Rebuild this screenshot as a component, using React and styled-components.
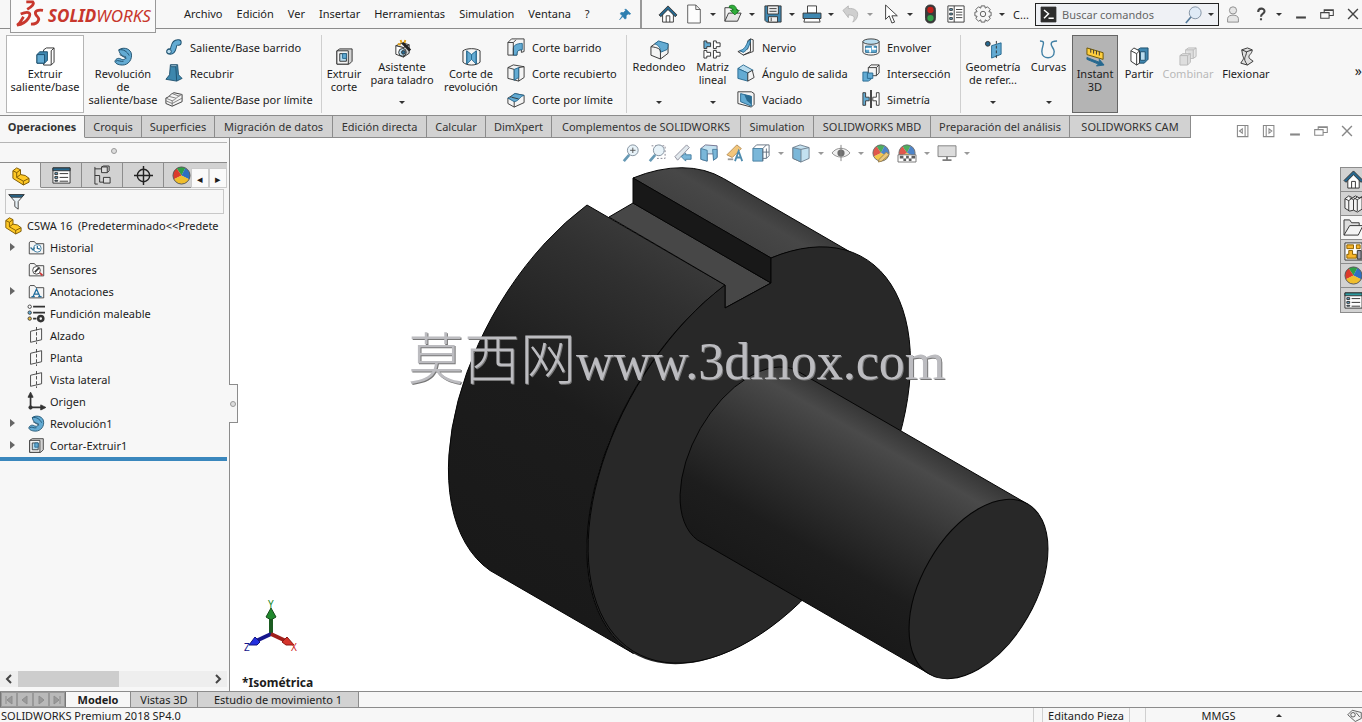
import React, { useState } from 'react';
import styled, { createGlobalStyle } from 'styled-components';

const GlobalStyle = createGlobalStyle`
  * {
    box-sizing: border-box;
  }

  body {
    margin: 0;
    background: #fff;
    color: #1c1c1c;
    font-family: 'Noto Sans', 'Open Sans', sans-serif;
    font-size: 11px;
    line-height: 13px;
  }

  button, input {
    margin: 0;
    padding: 0;
    border: 0;
    background: none;
    color: inherit;
    font: inherit;
  }
`;

const K = '#333';
const B = '#63abd3';
const D = '#26688f';
const L = '#b9dcee';
const W = '#f4f4f4';
const G = '#d3d3d3';

const box = (top, front, side) => (
  <>
    <path d="M3 6l7-3 7 2-6 3z" fill={top} />
    <path d="M3 6l8 2v10l-8-3z" fill={front} />
    <path d="M17 5v9l-6 4V8z" fill={side} />
  </>
);

const house = (
  <>
    <path d="M4 10v9h12v-9l-6-6z" fill="#fff" />
    <path d="M8 19v-7h4v7" fill="none" />
    <path d="M0 11L10 1l10 10-2 2-8-8-8 8z" fill={D} />
  </>
);

const folder = (
  <path d="M1.500 4.500v13h17v-12h-9l-2-2.500h-5z" fill={W} />
);

const part = (
  <g stroke="#7a5600">
    <path d="M2 5l4-3 4 2v5l5 1 4 3v4l-6 3L2 13z" fill="#ffc926" />
    <path d="M2 5l4 2v5l7 4v4M6 7l4-3M6 12l4-3M13 16l6-3" fill="none" />
  </g>
);

const revolve = (
  <g stroke="#1d4f6d">
    <path d="M5 3c4-3 11-2 13 3 2 7-3 13-9 13-5 0-8-2-8-4 1-3 4-4 7-2 3 1 5-1 4-3-3 0-6-2-7-7z" fill={B} />
    <path d="M5 3c5-1 9 2 11 6M6 8l7 4M2 15c2-2 5 1 8 0" fill="none" />
  </g>
);

const cutExtrude = (
  <>
    <path d="M2 4l3-2h13v13l-3 3H2z" fill={G} />
    <path d="M2 4h12v14H2z" fill={W} />
    <path d="M5 7h7v8H5z" fill={L} />
    <path d="M8 7h4v5H8z" fill={B} stroke={D} />
  </>
);

const plane = (
  <>
    <path d="M3 5l13-3v13L3 18z" fill="none" />
    <path d="M10 0v20" fill="none" strokeDasharray="4 2" />
  </>
);

const sphere = (
  <g stroke="none">
    <circle cx="10" cy="10" r="9" fill="#d7d7d7" />
    <path d="M10 10L5 2.500A9 9 0 0 1 14 2z" fill="#2f9f45" />
    <path d="M10 10L5 2.500A9 9 0 0 0 2 14z" fill="#db3a2c" />
    <path d="M10 10L14 2A9 9 0 0 1 18 14z" fill="#2f6fc0" />
    <path d="M10 10l-8 4a9 9 0 0 0 16 0z" fill="#f0be2c" />
    <circle cx="10" cy="10" r="9" fill="none" stroke="#555" />
  </g>
);

const magnifier = (
  <>
    <circle cx="12" cy="7" r="6" fill="#e4f1f8" stroke="#678" />
    <path d="M8 12l-6 7" fill="none" stroke="#4c88a8" strokeWidth="3" />
  </>
);

const listPanel = (color) => (
  <>
    <path d="M1 2h18v16H1z" fill="#fff" />
    <path d="M1 2h18v3H1z" fill={color} />
    <path d="M3 7h3v2H3zM3 11h3v2H3zM3 15h3v1H3z" fill={B} />
    <path d="M8 8h9M8 12h9M8 16h9" />
  </>
);

const icons = {
  home: house,
  newDoc: <path d="M3 0h9l5 5v15H3zM12 0v5h5" fill="#fdfdfd" stroke="#555" />,
  open: (
    <>
      <path d="M1 18V3h6l2 2h6v4" fill={W} />
      <path d="M1 18L5 9h14l-4 9z" fill="#e6e6e6" />
      <path d="M6 1c4-2 8 0 8 5h3l-5 5-5-5h3c0-2-1-3-4-3z" fill="#2fae3a" stroke="#16771f" />
    </>
  ),
  save: (
    <>
      <path d="M1 1h18v18H3l-2-2z" fill="#3f87b0" />
      <path d="M4 1h12v9H4zM5 13h10v6H5z" fill="#eee" />
      <path d="M6 4h8M6 7h8M8 14v4" />
    </>
  ),
  print: (
    <>
      <path d="M5 1h10v8H5z" fill="#fff" />
      <path d="M0 9h20v6H0z" fill="#3f87b0" />
      <path d="M2 15h16l1 4H1z" fill="#fff" />
    </>
  ),
  undo: <path d="M1 6l6-5v3c7-1 12 3 10 9-1 3-2 4-5 6 3-5 2-8-5-8v3z" fill="#cfcfcf" stroke="#b5b5b5" />,
  cursor: <path d="M4 0v16l4-4 3 8 3-1-3-7h6z" fill="#fff" />,
  traffic: (
    <>
      <rect x="5" y="0" width="11" height="20" rx="5" fill="#3a3a3a" />
      <circle cx="10.500" cy="5.500" r="3.500" fill="#c4201b" stroke="none" />
      <circle cx="10.500" cy="14.500" r="3.500" fill="#35a14a" stroke="none" />
    </>
  ),
  options: (
    <>
      <path d="M1 1h18v18H1zM8 1v18" fill="#fff" />
      <path d="M3 4h3v2H3zM3 9h3v2H3zM3 14h3v2H3z" fill={B} />
      <path d="M10 5h7M10 8h7M10 11h7M10 14h7" />
    </>
  ),
  gear: (
    <>
      <path d="M8 1h4l.500 2.500 2.500-1.500 3 3-1.500 2.500L19 8v4l-2.500.500L18 15l-3 3-2.500-1.500L12 19H8l-.500-2.500L5 18l-3-3 1.500-2.500L1 12V8l2.500-.500L2 5l3-3 2.500 1.500z" fill="none" stroke="#555" />
      <circle cx="10" cy="10" r="3" fill="none" stroke="#555" />
    </>
  ),
  extrude: (
    <>
      <path d="M8 3l3-2h8v15l-3 3H8z" fill="#fff" />
      <path d="M16 4v15M16 4l3-3" />
      <path d="M1 8l3-3h8v9l-3 3H1z" fill="#3f87b0" stroke="#1d4f6d" />
      <path d="M1 8h8v9H1z" fill={B} stroke="#1d4f6d" />
    </>
  ),
  revolve,
  sweep: (
    <>
      <path d="M5 15c7 1 2-11 10-10" fill="none" stroke="#1d4f6d" strokeWidth="7" strokeLinecap="round" />
      <path d="M5 15c7 1 2-11 10-10" fill="none" stroke={B} strokeWidth="5" strokeLinecap="round" />
      <circle cx="4.500" cy="15" r="2.500" fill={L} stroke="#1d4f6d" />
    </>
  ),
  loft: (
    <>
      <path d="M6 1h8l1 11 4 4-6 3-12-2 4-5z" fill="#3d87ad" stroke="#1d4f6d" />
      <path d="M6 1h8l-2 2H7z" fill={L} stroke="#1d4f6d" />
      <path d="M12 3l1 16" stroke="#1d4f6d" />
    </>
  ),
  boundary: (
    <>
      <path d="M1 9c4-1 5-5 9-6l9 2v8L8 18l-7-3z" fill={W} />
      <path d="M1 9l7 3c4-1 6-6 11-7M8 12v6M4 7l8 2M8 4l8 3M1 12l7 3 11-6" fill="none" stroke="#777" />
    </>
  ),
  cutExtrude,
  hole: (
    <>
      {box(W, '#fff', G)}
      <circle cx="10" cy="13" r="4" fill={L} />
      <circle cx="11" cy="13" r="2" fill={D} />
      <path d="M10 3l8 8" strokeWidth="3" stroke="#222" />
      <path d="M8 0l1 3M13 0l-1 3M5 4l3 1" stroke="#e0a21d" strokeWidth="2" />
    </>
  ),
  cutRevolve: (
    <>
      <path d="M1 4c4-3 14-3 18 0v12c-4 4-14 4-18 0z" fill={W} />
      <path d="M5 4l5 4 5-4v14l-5-5-5 5z" fill={B} stroke={D} />
      <path d="M10 8v5M5 4v14M15 4v14" stroke={D} />
    </>
  ),
  cutSweep: (
    <>
      <path d="M1 5l4-4h14v14l-3 1v-3c-4 0-5 2-5 6H1z" fill={W} />
      <path d="M7 19V12c0-4 4-6 10-6v7c-4 0-6 1-6 6z" fill={B} stroke={D} />
      <path d="M1 5h6v14M7 5l3-3" fill="none" />
    </>
  ),
  cutLoft: (
    <>
      <path d="M1 4l6-3 12 2v12l-6 4-12-3z" fill={W} />
      <path d="M1 4l7 2v12M13 4v15M13 4l6-1" fill="none" />
      <path d="M8 6l5-2v11l-5 3z" fill={B} stroke={D} />
    </>
  ),
  cutBoundary: (
    <>
      <path d="M1 9l8-5 10 2v8l-11 5-7-4z" fill={W} />
      <path d="M1 9c4 1 4-4 8-5l10 2c-5 1-5 6-11 7z" fill={B} stroke={D} />
      <path d="M8 13v6M5 8l8 2" />
    </>
  ),
  fillet: (
    <>
      <path d="M1 7l7-5 11 2v10l-8 6-10-4z" fill={W} />
      <path d="M5 4l4-3 10 3c0 0 0 5-1 6l-7 3c0-4-1-7-6-9z" fill={B} stroke={D} />
      <path d="M1 7c7 1 10 2 10 6v7" fill="none" />
    </>
  ),
  pattern: (
    <>
      <path d="M1 1h3v2h4v4H4v2H1z" fill={B} />
      <path d="M11 1h3v2h4v4h-4v2h-3zM1 11h3v2h4v4H4v2H1zM11 11h3v2h4v4h-4v2h-3z" fill="#fff" />
    </>
  ),
  rib: (
    <>
      <path d="M1 15l11-3V3l3-2v14L7 19z" fill={W} />
      <path d="M3 14c5-1 7-5 9-10l3-2c-1 7-3 11-8 14z" fill={B} stroke={D} />
      <path d="M15 1l3 1v13l-11 4" fill="none" />
    </>
  ),
  draft: (
    <>
      <path d="M1 5l6-4 11 6-6 3z" fill={L} stroke={D} />
      <path d="M1 5l11 5v9L1 16z" fill={B} stroke={D} />
      <path d="M12 10l5-3 2 8-7 4z" fill={W} />
    </>
  ),
  shell: (
    <>
      <path d="M1 2h15l3 2v12l-3 3L1 15z" fill={W} />
      <path d="M4 4l12 3v11L4 13z" fill={B} stroke={D} />
      <path d="M8 5l8 2v9l-5-4z" fill="#296b91" stroke="none" />
    </>
  ),
  wrap: (
    <>
      <path d="M1 4v12c3 4 15 4 18 0V4z" fill={W} />
      <ellipse cx="10" cy="4" rx="9" ry="3" fill={L} />
      <path d="M4 9h12v7H4z" fill={B} stroke={D} />
      <path d="M4 12h5v4M12 9v3h4" fill="none" stroke="#fff" strokeWidth="2" />
    </>
  ),
  intersect: (
    <>
      <path d="M1 9h9v8l-3 2H1z" fill={B} stroke={D} />
      <path d="M7 4l3-3h9v9l-3 3H7z" fill={W} />
      <path d="M7 4h9v9M16 4l3-3" fill="none" />
      <path d="M6 10h6v6H6z" fill={B} stroke={D} />
    </>
  ),
  mirror: (
    <>
      <path d="M1 3h3v5h4v4H4v5H1z" fill={B} />
      <path d="M10 0v20" strokeWidth="2" />
      <path d="M19 3h-3v5h-4v4h4v5h3z" fill="#fff" />
    </>
  ),
  refGeometry: (
    <>
      <circle cx="4" cy="4" r="2.500" fill={D} />
      <path d="M8 6l10-3v12L8 19z" fill={B} stroke={D} />
      <path d="M13 1v18" strokeDasharray="3 2" />
    </>
  ),
  curves: <path d="M1 1c7 0 2 5 2 11 0 9 13 9 13 0 0-4-6-7-2-10 2-1 5-1 5-1" fill="none" stroke="#4080a5" strokeWidth="1.500" />,
  instant: (
    <>
      <path d="M1 1l17 5v7L1 8z" fill="#ffcf3e" stroke="#6d5500" />
      <path d="M5 2v4M8 3v4M11 4v4M14 5v4" />
      <path d="M1 11l13 5v-3l5 6-8 1 2-2-12-5z" fill={D} stroke={D} />
    </>
  ),
  split: (
    <>
      <path d="M8 3l3-2h8v12l-4 4H8z" fill="#3f87b0" stroke="#1d4f6d" />
      <path d="M11 5h5v9h-5z" fill={L} stroke="#1d4f6d" />
      <path d="M1 4l3-3 6 3v13l-3 2-6-4z" fill="#fff" />
      <path d="M1 4l6 3v12M7 7l3-3" fill="none" />
    </>
  ),
  combine: (
    <g stroke="#b9b9b9">
      <path d="M7 3l3-2h8v9l-3 2H7z" fill="#e8e8e8" />
      <path d="M7 3h8v9M15 3l3-2M1 9l3-2h8v9l-3 3H1zM1 9h8v10M9 9l3-2" fill="#dedede" />
    </g>
  ),
  flex: (
    <>
      <path d="M5 3l6-2 5 2c0 5-5 5-3 9l4 3-6 4-7-2c2-4 4-4 2-8z" fill="#e0e0e0" />
      <path d="M5 3l5 2c0 6-5 6 1 14M10 5l6-2" fill="none" />
    </>
  ),
  zoomFit: (
    <>
      {magnifier}
      <path d="M9 7h6M12 4v6" stroke="#333" />
    </>
  ),
  zoomArea: (
    <>
      <path d="M4 2h15v14H9" fill="none" strokeDasharray="2 2" stroke="#667" />
      {magnifier}
    </>
  ),
  prevView: (
    <>
      <path d="M1 14L14 1l3 3L4 18z" fill="#dce5ea" stroke="#778" />
      <path d="M8 14l5-4v2h6v5h-6v2z" fill={B} stroke={D} />
    </>
  ),
  section: (
    <>
      <path d="M1 5l5-4 13 1v13l-4 3v-7H8v8l-7-2z" fill={L} stroke="#557" />
      <path d="M1 5l7 2v12l-7-2zM14 6h5v9l-4 3z" fill={B} stroke={D} />
    </>
  ),
  annotView: (
    <>
      <path d="M1 12L12 1l5 4L7 15z" fill="#f0bd65" stroke="#a87735" />
      <path d="M2 17h6" stroke="#888" strokeWidth="2" />
      <path d="M10 19l4-11 4 11M11 15h6" fill="none" stroke="#2f78a0" strokeWidth="2" />
    </>
  ),
  viewOrient: (
    <>
      <path d="M1 5h11v14H1z" fill={B} stroke={D} />
      <path d="M1 5l4-4h14v12l-3 3h-4M12 5l4-4M12 5v14M16 5v11M12 9h7" fill="none" stroke="#456" />
    </>
  ),
  display: (
    <g stroke="#567">
      <path d="M1 4l8-3 10 3v12l-9 4-9-4z" fill={L} />
      <path d="M1 4l9 2v14l-9-4z" fill={B} />
      <path d="M10 6l9-2" />
    </g>
  ),
  eye: (
    <>
      <path d="M0 10c5-7 15-7 20 0-5 6-15 6-20 0z" fill="#eee" stroke="#777" />
      <circle cx="10" cy="10" r="4" fill="#555" stroke="none" />
      <path d="M10 1v18" stroke="#666" />
    </>
  ),
  sphere,
  editLook: (
    <>
      {sphere}
      <path d="M8 17l8-8 3 3-8 7-4 1z" fill="#e8c06a" stroke="#8a6a2a" />
    </>
  ),
  scene: (
    <>
      {sphere}
      <path d="M0 12h20v8H0z" fill="#fff" stroke="#555" />
      <path d="M2 13h4v3H2zM9 13h3v3H9zM15 13h4v3h-4zM6 16h3v3H6zM12 16h3v3h-3z" fill="#444" stroke="none" />
    </>
  ),
  monitor: (
    <g stroke="#666">
      <path d="M0 2h20v12H0z" fill="#d6d6d6" />
      <path d="M10 14v4M5 18h10" strokeWidth="2" />
    </g>
  ),
  part,
  propList: listPanel(D),
  config: (
    <>
      <path d="M2 1v18M2 3h7M2 10h5v7h4M2 19h3" fill="none" />
      <path d="M9 1h6v6H9zM11 12h7v6h-7z" fill="#ddd" />
      <path d="M9 1l2-1h6v5l-2 2" fill="none" />
    </>
  ),
  target: (
    <g stroke="#222" fill="none" strokeWidth="1.500">
      <circle cx="10" cy="10" r="6.500" />
      <path d="M10 0v20M0 10h20" />
    </g>
  ),
  funnel: (
    <>
      <path d="M1 2h18l-7 8v9l-4-3v-6z" fill="#e8f1f6" />
      <path d="M1 2h18l-3 3H4z" fill={D} />
    </>
  ),
  history: (
    <>
      {folder}
      <circle cx="11" cy="11" r="4.500" fill="#fff" stroke="#2b7098" />
      <path d="M11 8v3l3 1M3 10l3 3 2-3" fill="none" stroke="#2b7098" strokeWidth="1.500" />
    </>
  ),
  sensors: (
    <>
      {folder}
      <circle cx="10" cy="11" r="4.500" fill="#fff" />
      <path d="M8 13l5-5" strokeWidth="2" />
      <path d="M14 14l3 3" stroke="#c33" strokeWidth="2" />
    </>
  ),
  notes: (
    <>
      {folder}
      <path d="M6 16l4-9 4 9M7.500 13h5M4 16h4M12 16h4" fill="none" stroke="#1f6c9d" strokeWidth="1.500" />
    </>
  ),
  material: (
    <>
      <circle cx="2" cy="2" r="2" fill="#fff" />
      <circle cx="2" cy="9" r="2" fill={B} />
      <circle cx="2" cy="16" r="2" fill="#e8b83c" />
      <path d="M6 2h14M6 9h14M6 16h4" strokeWidth="2" />
      <circle cx="15" cy="16" r="3" fill="none" strokeWidth="3" />
    </>
  ),
  plane,
  origin: (
    <>
      <path d="M3 3v14h13" fill="none" strokeWidth="2" />
      <path d="M3-1L0 5h6zM21 17l-6-3v6z" fill={K} />
      <circle cx="3" cy="17" r="2" fill={K} />
    </>
  ),
  books: (
    <>
      <path d="M1 5l4-3 4 2 3-2 4 2 3-1v13l-5 3-4-2-4 1-5-3z" fill={W} />
      <path d="M1 5l4 2v11M5 7l4-3M10 6v11M6 4l4 2 4-3M14 6v12M10 4l4 2 5-3" fill="none" />
    </>
  ),
  folderOpen: (
    <>
      <path d="M0 18V2h6l2 3h8v3" fill="#ddd" />
      <path d="M0 18L6 8h14l-5 10z" fill="#f3f3f3" />
    </>
  ),
  palette: (
    <>
      <path d="M1 1h18v18H1z" fill="#fff" />
      <path d="M3 3h7v4H3zM13 3h4v4h-4zM5 9h4v4h4v4H3v-4h2z" fill="#f7b52b" stroke="#8a5f00" />
      <path d="M14 9h4v9h-4z" fill="#99a" />
    </>
  ),
  taskList: listPanel('#2c9ba0'),
  user: (
    <g stroke="#888" fill="#e6e6e6">
      <circle cx="10" cy="6" r="4" />
      <path d="M4 19v-4c0-5 12-5 12 0v4z" />
    </g>
  ),
  help: <path d="M6 7c0-6 9-6 9-1 0 4-5 3-5 8M10 16v3" fill="none" strokeWidth="3" stroke="#444" />,
  minimize: <path d="M3 15h14" strokeWidth="3" stroke="currentColor" />,
  restore: <path d="M1 8h12v8H1zM6 8V4h13v8h-6M6 5h13" fill="none" stroke="currentColor" strokeWidth="1.500" />,
  close: <path d="M3 3l14 14M17 3L3 17" stroke="currentColor" strokeWidth="2" />,
  paneLeft: <path d="M2 2h15v16H2zM13 2v16M9 7v6l-4-3z" fill="none" stroke="currentColor" strokeWidth="1.500" />,
  paneRight: <path d="M2 2h15v16H2zM6 2v16M10 7v6l4-3z" fill="none" stroke="currentColor" strokeWidth="1.500" />,
  pin: <path d="M11 2l7 7-2 1-2-1-3 3 0 4-2 1-3-4-5 5 4-6-3-3 1-2h4l3-3-1-2z" fill="#2f7fb0" stroke="#2f7fb0" />,
  prompt: (
    <>
      <path d="M0 0h20v20H0z" fill="#2d2d2d" />
      <path d="M4 4l6 5-6 6M10 15h7" fill="none" stroke="#fff" strokeWidth="2" />
    </>
  ),
  search: (
    <>
      <circle cx="12" cy="8" r="7" fill="#dfeaf6" stroke="#789" />
      <path d="M7 13l-6 7" stroke="#567b9c" strokeWidth="2" />
    </>
  ),
  tag: (
    <>
      <path d="M1 9l6-6 12 3v8l-8 4z" fill={W} />
      <circle cx="8" cy="9" r="3" fill="none" />
      <path d="M12 6l5 6" />
    </>
  ),
};

const Svg = styled.svg`
  display: block;
  flex: none;
  overflow: visible;
`;

const Icon = ({ name, size = 20 }) => (
  <Svg width={size} height={size} viewBox="0 0 20 20" stroke={K} aria-hidden="true">
    {icons[name]}
  </Svg>
);

const Caret = styled.span`
  flex: none;
  width: 0;
  height: 0;
  border: 3px solid transparent;
  border-top-color: ${({ $color }) => $color || '#333'};
  border-bottom-width: 0;
`;

const App = () => {
  const [activeTab, setActiveTab] = useState('Operaciones');
  const [query, setQuery] = useState('');
  const [filter, setFilter] = useState('');

  return (
    <Window>
      <GlobalStyle />
      <TitleBar>
        <Logo>
          <Svg width="26" height="26" viewBox="0 0 28 26" fill="none" stroke="#c8372d" strokeWidth="3">
            <path d="M10 0h7c2 2-1 5-6 8" />
            <path d="M4 13c9-4 12-1 8 5-2 3-6 6-12 7 4-2 5-6 7-9" />
            <path d="M28 9c-6-1-9 1-8 4s5 4 3 7c-1 3-4 4-8 4" />
          </Svg>
          <Brand><strong>SOLID</strong>WORKS</Brand>
        </Logo>
        <Menu aria-label="Principal">
          {menus.map((item) => <MenuButton key={item}>{item}</MenuButton>)}
          <PinButton aria-label="Anclar"><Icon name="pin" size={13} /></PinButton>
        </Menu>
        <QuickTools>
          {quickTools.map(([name, label, menu, gray]) => (
            <QuickButton key={name} aria-label={label} $menu={menu}>
              <Icon name={name} size={18} />
              {menu && <Caret $color={gray && '#999'} />}
            </QuickButton>
          ))}
          <span>C...</span>
        </QuickTools>
        <SearchBox>
          <Icon name="prompt" size={15} />
          <SearchInput
            aria-label="Buscar comandos"
            placeholder="Buscar comandos"
            value={query}
            onChange={(e) => setQuery(e.target.value)}
          />
          <Icon name="search" size={17} />
          <Caret />
        </SearchBox>
        <WindowTools>
          <IconButton aria-label="Usuario"><Icon name="user" size={18} /></IconButton>
          <HelpButton aria-label="Ayuda"><Icon name="help" size={14} /><Caret /></HelpButton>
          <IconButton aria-label="Minimizar"><Icon name="minimize" size={14} /></IconButton>
          <IconButton aria-label="Restaurar"><Icon name="restore" size={14} /></IconButton>
          <IconButton aria-label="Cerrar"><Icon name="close" size={14} /></IconButton>
        </WindowTools>
      </TitleBar>

      <Ribbon>
        <Group>
          <Tool icon="extrude" lines={['Extruir', 'saliente/base']} width={78} look="framed" />
          <Tool icon="revolve" lines={['Revolución', 'de', 'saliente/base']} width={78} />
          <ToolStack width={155} tools={[['sweep', 'Saliente/Base barrido'], ['loft', 'Recubrir'], ['boundary', 'Saliente/Base por límite']]} />
        </Group>
        <Group>
          <Tool icon="cutExtrude" lines={['Extruir', 'corte']} width={44} />
          <Tool icon="hole" lines={['Asistente', 'para taladro']} width={72} menu />
          <Tool icon="cutRevolve" lines={['Corte de', 'revolución']} width={66} />
          <ToolStack width={118} tools={[['cutSweep', 'Corte barrido'], ['cutLoft', 'Corte recubierto'], ['cutBoundary', 'Corte por límite']]} />
        </Group>
        <Group>
          <Tool icon="fillet" lines={['Redondeo']} width={64} menu />
          <Tool icon="pattern" lines={['Matriz', 'lineal']} width={43} menu />
          <ToolStack width={125} tools={[['rib', 'Nervio'], ['draft', 'Ángulo de salida'], ['shell', 'Vaciado']]} />
          <ToolStack width={97} tools={[['wrap', 'Envolver'], ['intersect', 'Intersección'], ['mirror', 'Simetría']]} />
        </Group>
        <Group $last>
          <Tool icon="refGeometry" lines={['Geometría', 'de refer...']} width={64} menu />
          <Tool icon="curves" lines={['Curvas']} width={47} menu />
          <Tool icon="instant" lines={['Instant', '3D']} width={46} look="pressed" />
          <Tool icon="split" lines={['Partir']} width={42} />
          <Tool icon="combine" lines={['Combinar']} width={56} look="disabled" />
          <Tool icon="flex" lines={['Flexionar']} width={60} />
        </Group>
        <MoreButton aria-label="Más herramientas">»</MoreButton>
      </Ribbon>

      <TabRow>
        <Tabs role="tablist">
          {ribbonTabs.map(([label, width]) => (
            <Tab
              key={label}
              role="tab"
              aria-selected={label === activeTab}
              $active={label === activeTab}
              $width={width}
              onClick={() => setActiveTab(label)}
            >
              {label}
            </Tab>
          ))}
        </Tabs>
        <DocTools>
          <IconButton aria-label="Panel izquierdo"><Icon name="paneLeft" size={14} /></IconButton>
          <IconButton aria-label="Panel derecho"><Icon name="paneRight" size={14} /></IconButton>
          <IconButton aria-label="Minimizar documento"><Icon name="minimize" size={14} /></IconButton>
          <IconButton aria-label="Restaurar documento"><Icon name="restore" size={14} /></IconButton>
          <IconButton aria-label="Cerrar documento"><Icon name="close" size={14} /></IconButton>
        </DocTools>
      </TabRow>

      <Body>
        <Panel>
          <Splitter><Dot /></Splitter>
          <PanelTabs>
            {panelTabs.map(([name, label], i) => (
              <PanelTab key={name} aria-label={label} $active={i === 0}>
                <Icon name={name} size={19} />
              </PanelTab>
            ))}
            <PanelArrow aria-label="Anterior">◂</PanelArrow>
            <PanelArrow aria-label="Siguiente">▸</PanelArrow>
          </PanelTabs>
          <Filter>
            <Icon name="funnel" size={17} />
            <FilterInput aria-label="Filtrar" value={filter} onChange={(e) => setFilter(e.target.value)} />
          </Filter>
          <RootNode><Icon name="part" size={18} />{'CSWA 16  (Predeterminado<<Predete'}</RootNode>
          <Tree>
            {nodes.map(([icon, label, open]) => (
              <Node key={label}>
                <NodeArrow>{open && <Expander />}</NodeArrow>
                <Icon name={icon} size={17} />
                {label}
              </Node>
            ))}
          </Tree>
          <RollbackBar />
          <Scroll>
            <ScrollArrow aria-label="Desplazar a la izquierda"><Chevron viewBox="0 0 8 10"><path d="M6 1L2 5l4 4" /></Chevron></ScrollArrow>
            <Track><Thumb /></Track>
            <ScrollArrow aria-label="Desplazar a la derecha"><Chevron viewBox="0 0 8 10"><path d="M2 1l4 4-4 4" /></Chevron></ScrollArrow>
          </Scroll>
        </Panel>

        <Viewport>
          <Model />
          <PanelHandle aria-label="Ocultar panel"><Dot /></PanelHandle>
          <ViewTools>
            {viewTools.map(([name, label, menu]) => (
              <ViewButton key={name} aria-label={label}>
                <Icon name={name} size={18} />
                {menu && <Caret $color="#888" />}
              </ViewButton>
            ))}
          </ViewTools>
          <TaskPane>
            {taskTabs.map(([name, label]) => (
              <TaskTab key={name} aria-label={label} $active={name === 'folderOpen'}>
                <Icon name={name} size={19} />
              </TaskTab>
            ))}
          </TaskPane>
          <Triad />
          <ViewName>*Isométrica</ViewName>
        </Viewport>
      </Body>

      <BottomTabs>
        <Player>
          {playerButtons.map(([label, d]) => (
            <PlayerButton key={label} aria-label={label}>
              <Svg width="8" height="8" viewBox="0 0 8 8" fill="#999" stroke="#8d8d8d"><path d={d} /></Svg>
            </PlayerButton>
          ))}
        </Player>
        <BottomTab $active $width={65}>Modelo</BottomTab>
        <BottomTab $width={67}>Vistas 3D</BottomTab>
        <BottomTab $width={161}>Estudio de movimiento 1</BottomTab>
      </BottomTabs>

      <StatusBar>
        <Version>SOLIDWORKS Premium 2018 SP4.0</Version>
        <StatusCell $width={9} />
        <StatusCell $width={87}>Editando Pieza</StatusCell>
        <StatusCell $width={16} />
        <UnitsCell $width={122}>MMGS</UnitsCell>
        <UnitsButton aria-label="Unidades"><CaretUp /></UnitsButton>
        <Icon name="tag" size={15} />
      </StatusBar>
    </Window>
  );
};

const Tool = ({ icon, lines, width, menu, look }) => (
  <ToolButton $width={width} $menu={menu} $look={look} disabled={look === 'disabled'}>
    <Icon name={icon} size={19} />
    <ToolLabel>
      {lines.map((line) => <span key={line}>{line}</span>)}
    </ToolLabel>
    {menu && <Caret />}
  </ToolButton>
);

const ToolStack = ({ tools, width }) => (
  <Stack $width={width}>
    {tools.map(([icon, label]) => (
      <SmallTool key={label}>
        <Icon name={icon} size={18} />
        {label}
      </SmallTool>
    ))}
  </Stack>
);

const Model = () => (
  <Scene viewBox="230 138 1132 553" preserveAspectRatio="xMidYMid meet">
    <defs>
      <linearGradient id="drum" gradientUnits="userSpaceOnUse" x1="496" y1="573" x2="724" y2="178">
        <stop offset="0" stopColor="#191919" />
        <stop offset="0.400" stopColor="#1c1c1c" />
        <stop offset="0.700" stopColor="#303030" />
        <stop offset="0.860" stopColor="#3e3e3e" />
        <stop offset="0.960" stopColor="#474747" />
        <stop offset="1" stopColor="#3a3a3a" />
      </linearGradient>
      <linearGradient id="shaft" gradientUnits="userSpaceOnUse" x1="700" y1="541" x2="798" y2="371">
        <stop offset="0" stopColor="#191919" />
        <stop offset="0.250" stopColor="#1d1d1d" />
        <stop offset="0.600" stopColor="#333" />
        <stop offset="0.880" stopColor="#4a4a4a" />
        <stop offset="1" stopColor="#363636" />
      </linearGradient>
    </defs>
    <g stroke="#050505" strokeLinejoin="round">
      <ellipse cx="747.500" cy="456" rx="228" ry="131.600" transform="rotate(-60 747.500 456)" fill="#282828" stroke="none" />
      <path
        d="M587 205L725 285A228.400 131.800 -60 0 0 633.500 653.500L490 570.500A228.400 131.800 -60 0 1 587 205Z"
        fill="url(#drum)"
      />
      <path
        d="M633 178A228.400 131.800 -60 0 1 723.500 178.500L861.500 258.500A228.400 131.800 -60 0 0 771 258Z"
        fill="url(#drum)"
      />
      <path d="M633 203L771 283L725 308V285L609 217Z" fill="#474747" />
      <path d="M633 178L771 258V283L633 203Z" fill="#181818" />
      <path
        d="M725 285V308L771 283V258A228 131.600 -60 1 1 725 285Z"
        fill="#282828"
      />
      <path
        d="M795.500 370L1027.500 504L929.500 674L697.500 540A98.300 56.700 -60 0 1 795.500 370Z"
        fill="url(#shaft)"
      />
      <ellipse cx="978.500" cy="589" rx="98.300" ry="56.700" transform="rotate(-60 978.500 589)" fill="#282828" />
    </g>
    <Watermark x="408" y="379">
      莫西网<WatermarkUrl>www.3dmox.com</WatermarkUrl>
    </Watermark>
  </Scene>
);

const Triad = () => (
  <TriadSvg width="58" height="56" viewBox="0 0 58 56">
    <path d="M29 35V17" stroke="#1c5c22" strokeWidth="4" />
    <path d="M29 35L14 42" stroke="#16168c" strokeWidth="4" />
    <path d="M29 35L44 42" stroke="#a0201c" strokeWidth="4" />
    <path d="M29 9l5 9-5 3-5-3z" fill="#21892d" stroke="#164a1b" />
    <path d="M7 46l6-8 5 5-3 3z" fill="#2430e0" stroke="#131380" />
    <path d="M52 46l-7-8-5 5 4 3z" fill="#d5342b" stroke="#8a1814" />
    <text x="26" y="9" fill="#21892d">Y</text>
    <text x="2" y="52" fill="#15158c">Z</text>
    <text x="49" y="52" fill="#c22">X</text>
  </TriadSvg>
);

const menus = ['Archivo', 'Edición', 'Ver', 'Insertar', 'Herramientas', 'Simulation', 'Ventana', '?'];

const quickTools = [
  ['home', 'Inicio'],
  ['newDoc', 'Nuevo', true],
  ['open', 'Abrir', true],
  ['save', 'Guardar', true],
  ['print', 'Imprimir', true],
  ['undo', 'Deshacer', true, true],
  ['cursor', 'Seleccionar', true],
  ['traffic', 'Reconstruir'],
  ['options', 'Propiedades de archivo'],
  ['gear', 'Opciones', true],
];

const ribbonTabs = [
  ['Operaciones', 85],
  ['Croquis', 57],
  ['Superficies', 73],
  ['Migración de datos', 118],
  ['Edición directa', 94],
  ['Calcular', 59],
  ['DimXpert', 66],
  ['Complementos de SOLIDWORKS', 189],
  ['Simulation', 73],
  ['SOLIDWORKS MBD', 117],
  ['Preparación del análisis', 139],
  ['SOLIDWORKS CAM', 121],
];

const panelTabs = [
  ['part', 'Gestor de diseño'],
  ['propList', 'Propiedades'],
  ['config', 'Configuraciones'],
  ['target', 'DimXpert'],
  ['sphere', 'Aspectos'],
];

const nodes = [
  ['history', 'Historial', true],
  ['sensors', 'Sensores'],
  ['notes', 'Anotaciones', true],
  ['material', 'Fundición maleable'],
  ['plane', 'Alzado'],
  ['plane', 'Planta'],
  ['plane', 'Vista lateral'],
  ['origin', 'Origen'],
  ['revolve', 'Revolución1', true],
  ['cutExtrude', 'Cortar-Extruir1', true],
];

const viewTools = [
  ['zoomFit', 'Zoom para ajustar'],
  ['zoomArea', 'Zoom de área'],
  ['prevView', 'Vista previa'],
  ['section', 'Vista de sección'],
  ['annotView', 'Vistas de anotación'],
  ['viewOrient', 'Orientación', true],
  ['display', 'Estilo de visualización', true],
  ['eye', 'Ocultar', true],
  ['editLook', 'Editar aspecto'],
  ['scene', 'Aplicar escena', true],
  ['monitor', 'Configurar vista', true],
];

const taskTabs = [
  ['home', 'Recursos'],
  ['books', 'Biblioteca'],
  ['folderOpen', 'Explorador'],
  ['palette', 'Paleta'],
  ['sphere', 'Aspectos'],
  ['taskList', 'Propiedades'],
];

const playerButtons = [
  ['Primero', 'M1 0v8M7 0v8L2 4z'],
  ['Atrás', 'M6 0v8L1 4z'],
  ['Adelante', 'M2 0v8l5-4z'],
  ['Último', 'M7 0v8M1 0v8l5-4z'],
];

const Window = styled.div`
  display: flex;
  flex-direction: column;
  height: 100vh;
  overflow: hidden;
  background: #fff;
`;

const TitleBar = styled.header`
  position: relative;
  display: flex;
  align-items: center;
  flex: none;
  height: 29px;
  padding-left: 177px;
  background: #f7f7f7;
  border-bottom: 1px solid #8c8c8c;
`;

/* hangs over the top edge of the ribbon */
const Logo = styled.div`
  position: absolute;
  top: 0;
  left: 10px;
  z-index: 1;
  display: flex;
  align-items: center;
  gap: 5px;
  height: 33px;
  padding: 0 4px 4px 6px;
  background: #fafafa;
  border: 1px solid #999;
  border-top: 0;
`;

const Brand = styled.span`
  color: #c8372d;
  font-size: 17px;
  font-style: italic;
  line-height: 20px;
  padding-top: 4px;
`;

const Menu = styled.nav`
  display: flex;
  align-items: center;
  align-self: stretch;
  padding-right: 8px;
  border-right: 2px solid #999;
`;

const MenuButton = styled.button`
  padding: 0 7px 2px;
  white-space: nowrap;

  &:hover {
    background: #dcebf5;
  }
`;

const IconButton = styled.button`
  display: flex;
  align-items: center;
  justify-content: center;
  color: #444;
`;

const PinButton = styled(IconButton)`
  margin-left: 22px;
`;

const QuickTools = styled.div`
  display: flex;
  align-items: center;
  justify-content: space-between;
  flex: 1;
  padding: 0 6px 0 17px;
`;

const QuickButton = styled(IconButton)`
  gap: ${({ $menu }) => ($menu ? '7px' : '0')};
`;

const SearchBox = styled.div`
  display: flex;
  align-items: center;
  gap: 6px;
  flex: none;
  width: 184px;
  height: 23px;
  padding: 0 4px 0 5px;
  background: #eff1f5;
  border: 1px solid #222;
`;

const SearchInput = styled.input`
  flex: 1;
  min-width: 0;
  outline: 0;

  &::placeholder {
    color: #666;
    opacity: 1;
  }
`;

const WindowTools = styled.div`
  display: flex;
  align-items: center;
  gap: 12px;
  flex: none;
  padding: 0 2px 0 5px;
`;

const HelpButton = styled(IconButton)`
  gap: 8px;
`;

const Ribbon = styled.section`
  display: flex;
  flex: none;
  height: 87px;
  padding: 6px 0 2px 6px;
  background: #f7f7f7;
  border-bottom: 1px solid #8c8c8c;
`;

const Group = styled.div`
  display: flex;
  padding-right: 4px;
  border-right: ${({ $last }) => ($last ? '0' : '1px solid #cfcfcf')};
`;

const toolBackground = { framed: '#fff', pressed: '#b4b4b4' };

const ToolButton = styled.button`
  display: flex;
  flex-direction: column;
  align-items: center;
  gap: 1px;
  min-width: ${({ $width }) => $width}px;
  height: 78px;
  padding: ${({ $menu }) => ($menu ? '4px 0 8px' : '11px 0 0')};
  white-space: nowrap;
  background: ${({ $look }) => toolBackground[$look] || 'transparent'};
  border: 1px solid ${({ $look }) => ({ framed: '#b5b5b5', pressed: '#666' }[$look] || 'transparent')};
  color: ${({ $look }) => ($look === 'disabled' ? '#b9b9b9' : '#1c1c1c')};

  & > ${Caret} {
    margin-top: auto;
  }
`;

const ToolLabel = styled.span`
  display: flex;
  flex-direction: column;
  align-items: center;
`;

const Stack = styled.div`
  display: flex;
  flex-direction: column;
  min-width: ${({ $width }) => $width}px;
`;

const SmallTool = styled.button`
  display: flex;
  align-items: center;
  gap: 7px;
  height: 26px;
  padding: 0 0 2px 3px;
  white-space: nowrap;
`;

const MoreButton = styled.button`
  align-self: center;
  margin-left: auto;
  padding-bottom: 8px;
  font-size: 14px;
`;

const TabRow = styled.div`
  display: flex;
  align-items: center;
  justify-content: space-between;
  flex: none;
  height: 22px;
`;

const Tabs = styled.div`
  display: flex;
  height: 22px;
`;

const Tab = styled.button`
  min-width: ${({ $width }) => $width}px;
  padding: 0 4px;
  white-space: nowrap;
  background: ${({ $active }) => ($active ? '#f7f7f7' : '#d2d2d2')};
  border-right: 1px solid #8c8c8c;
  border-bottom: 1px solid ${({ $active }) => ($active ? '#f7f7f7' : '#8c8c8c')};
  font-weight: ${({ $active }) => ($active ? 700 : 400)};
  color: #333;
`;

const DocTools = styled.div`
  display: flex;
  gap: 12px;
  padding: 8px 8px 0 0;

  ${IconButton} {
    color: #888;
  }
`;

const Body = styled.main`
  display: flex;
  flex: 1;
  min-height: 0;
`;

const Panel = styled.aside`
  display: flex;
  flex-direction: column;
  flex: none;
  width: 230px;
  padding: 4px 2px 4px 0;
  background: #f7f7f7;
  border-right: 1px solid #8c8c8c;
`;

const Splitter = styled.div`
  display: flex;
  align-items: center;
  justify-content: center;
  height: 20px;
  padding-bottom: 4px;
  border-top: 1px solid #b5b5b5;
`;

const Dot = styled.span`
  width: 6px;
  height: 6px;
  border: 1px solid #999;
  border-radius: 50%;
  background: #ddd;
`;

const PanelTabs = styled.div`
  display: flex;
  align-items: flex-end;
  height: 26px;
  background: #d2d2d2;
  border-top: 1px solid #8c8c8c;
`;

const PanelTab = styled.button`
  display: flex;
  align-items: center;
  justify-content: center;
  flex: 0 0 41px;
  height: 25px;
  overflow: hidden;
  background: ${({ $active }) => ($active ? '#f7f7f7' : '#d2d2d2')};
  border-right: 1px solid #8c8c8c;
  border-bottom: 1px solid ${({ $active }) => ($active ? '#f7f7f7' : '#8c8c8c')};

  &:nth-child(5) {
    flex: 1;
    justify-content: flex-end;
    border-right: 0;
  }
`;

const PanelArrow = styled.button`
  flex: none;
  width: 18px;
  height: 20px;
  background: #fafafa;
  border: 1px solid #ccc;
`;

const Filter = styled.label`
  display: flex;
  align-items: center;
  height: 25px;
  margin: 1px 3px 1px 5px;
  padding-left: 2px;
  border: 1px solid #c8c8c8;
`;

const FilterInput = styled.input`
  flex: 1;
  min-width: 0;
  height: 22px;
  outline: 0;
`;

const RootNode = styled.div`
  display: flex;
  align-items: center;
  gap: 5px;
  height: 22px;
  padding: 0 0 2px 4px;
  white-space: pre;
`;

const Tree = styled.ul`
  margin: 0;
  padding: 0;
  list-style: none;
`;

const Node = styled.li`
  display: flex;
  align-items: center;
  gap: 5px;
  height: 22px;
  padding-bottom: 2px;
  white-space: nowrap;
`;

const NodeArrow = styled.span`
  width: 23px;
  padding-left: 10px;
`;

const Expander = styled.i`
  display: block;
  width: 0;
  height: 0;
  border: 4px solid transparent;
  border-left: 5px solid #666;
  border-right: 0;
`;

const RollbackBar = styled.div`
  height: 4px;
  background: #3a87bd;
`;

const Scroll = styled.div`
  display: flex;
  align-items: center;
  height: 16px;
  margin-top: auto;
  background: #eee;
`;

const ScrollArrow = styled.button`
  display: flex;
  align-items: center;
  justify-content: center;
  width: 18px;
  height: 16px;
`;

const Chevron = styled.svg`
  width: 8px;
  height: 10px;
  fill: none;
  stroke: #444;
  stroke-width: 2;
`;

const Track = styled.div`
  flex: 1;
  height: 16px;
`;

const Thumb = styled.div`
  width: 53%;
  height: 16px;
  background: #cdcdcd;
`;

const Viewport = styled.section`
  position: relative;
  flex: 1;
  min-width: 0;
  background: #fff;
`;

const Scene = styled.svg`
  display: block;
  width: 100%;
  height: 100%;
`;

const Watermark = styled.text`
  font-family: 'Noto Sans CJK SC', sans-serif;
  font-size: 56px;
  font-weight: 300;
  fill: #bcbcc0;
  text-shadow: 1px 1px 0 #777;
`;

const WatermarkUrl = styled.tspan`
  font-family: 'Liberation Serif', serif;
  font-size: 52px;
  font-weight: 400;
`;

const PanelHandle = styled.button`
  position: absolute;
  top: 246px;
  left: -1px;
  display: flex;
  align-items: center;
  justify-content: center;
  width: 9px;
  height: 39px;
  background: #f7f7f7;
  border: 1px solid #8c8c8c;
  border-left: 0;
`;

const ViewTools = styled.div`
  position: absolute;
  top: 6px;
  right: 0;
  left: 0;
  display: flex;
  justify-content: center;
  gap: 8px;
`;

const ViewButton = styled.button`
  display: flex;
  align-items: center;
  gap: 8px;
  opacity: 0.850;
`;

const TaskPane = styled.div`
  position: absolute;
  top: 29px;
  right: 0;
  width: 22px;
  border: 1px solid #8c8c8c;
  border-right: 0;
`;

const TaskTab = styled.button`
  display: flex;
  align-items: center;
  width: 21px;
  height: 24px;
  padding-left: 3px;
  overflow: hidden;
  background: ${({ $active }) => ($active ? '#f7f7f7' : '#d2d2d2')};

  &:not(:last-child) {
    border-bottom: 1px solid #8c8c8c;
  }
`;

const TriadSvg = styled.svg`
  position: absolute;
  bottom: 36px;
  left: 12px;
  overflow: visible;
  font-size: 10px;
`;

const ViewName = styled.div`
  position: absolute;
  bottom: 2px;
  left: 12px;
  font-size: 12px;
  font-weight: 700;
`;

const BottomTabs = styled.div`
  display: flex;
  flex: none;
  height: 17px;
  background: #f7f7f7;
  border-top: 1px solid #8c8c8c;
  border-bottom: 1px solid #8c8c8c;
`;

const Player = styled.div`
  display: flex;
  padding: 0 1px;
  background: #777;
`;

const PlayerButton = styled.button`
  display: flex;
  align-items: center;
  justify-content: center;
  width: 16px;
  background: #b9b9b9;
  border: 1px solid #999;
`;

const BottomTab = styled.button`
  min-width: ${({ $width }) => $width}px;
  padding: 0 8px;
  white-space: nowrap;
  background: ${({ $active }) => ($active ? '#f7f7f7' : '#d2d2d2')};
  border-right: 1px solid #8c8c8c;
  font-weight: ${({ $active }) => ($active ? 700 : 400)};
`;

const StatusBar = styled.footer`
  display: flex;
  flex: none;
  height: 14px;
  background: #f7f7f7;
  line-height: 16px;
`;

const Version = styled.span`
  flex: 1;
  padding-left: 1px;
`;

const StatusCell = styled.span`
  width: ${({ $width }) => $width}px;
  border-left: 1px solid #d0d0d0;
  text-align: center;
`;

const UnitsCell = styled(StatusCell)`
  padding-left: 24px;
`;

const UnitsButton = styled.button`
  display: flex;
  align-items: center;
  justify-content: center;
  width: 24px;
  margin-right: 56px;
`;

const CaretUp = styled(Caret)`
  transform: rotate(180deg);
`;

export default App;
